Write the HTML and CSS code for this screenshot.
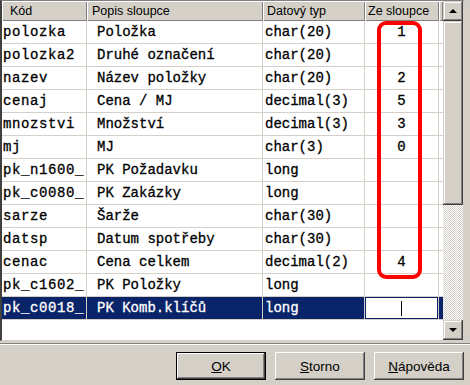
FILE: index.html
```html
<!DOCTYPE html>
<html>
<head>
    <title>Sloupce</title>
    <link rel="stylesheet" href="styles.css">
</head>
<body>
    <div class="list">
        <div class="grid">
            <div class="head">
                <div class="hcell h1">Kód</div>
                <div class="hcell h2">Popis sloupce</div>
                <div class="hcell h3">Datový typ</div>
                <div class="hcell h4">Ze sloupce</div>
                <div class="hcell h5"></div>
            </div>
            <div class="row"><div class="c kod">polozka</div><div class="c popis">Položka</div><div class="c typ">char(20)</div><div class="c ze">1</div><div class="c fill"></div></div>
            <div class="row"><div class="c kod">polozka2</div><div class="c popis">Druhé označení</div><div class="c typ">char(20)</div><div class="c ze"></div><div class="c fill"></div></div>
            <div class="row"><div class="c kod">nazev</div><div class="c popis">Název položky</div><div class="c typ">char(20)</div><div class="c ze">2</div><div class="c fill"></div></div>
            <div class="row"><div class="c kod">cenaj</div><div class="c popis">Cena / MJ</div><div class="c typ">decimal(3)</div><div class="c ze">5</div><div class="c fill"></div></div>
            <div class="row"><div class="c kod">mnozstvi</div><div class="c popis">Množství</div><div class="c typ">decimal(3)</div><div class="c ze">3</div><div class="c fill"></div></div>
            <div class="row"><div class="c kod">mj</div><div class="c popis">MJ</div><div class="c typ">char(3)</div><div class="c ze">0</div><div class="c fill"></div></div>
            <div class="row"><div class="c kod">pk_n1600_</div><div class="c popis">PK Požadavku</div><div class="c typ">long</div><div class="c ze"></div><div class="c fill"></div></div>
            <div class="row"><div class="c kod">pk_c0080_</div><div class="c popis">PK Zakázky</div><div class="c typ">long</div><div class="c ze"></div><div class="c fill"></div></div>
            <div class="row"><div class="c kod">sarze</div><div class="c popis">Šarže</div><div class="c typ">char(30)</div><div class="c ze"></div><div class="c fill"></div></div>
            <div class="row"><div class="c kod">datsp</div><div class="c popis">Datum spotřeby</div><div class="c typ">char(30)</div><div class="c ze"></div><div class="c fill"></div></div>
            <div class="row"><div class="c kod">cenac</div><div class="c popis">Cena celkem</div><div class="c typ">decimal(2)</div><div class="c ze">4</div><div class="c fill"></div></div>
            <div class="row"><div class="c kod">pk_c1602_</div><div class="c popis">PK Položky</div><div class="c typ">long</div><div class="c ze"></div><div class="c fill"></div></div>
            <div class="row selected"><div class="c kod">pk_c0018_</div><div class="c popis">PK Komb.klíčů</div><div class="c typ">long</div><div class="c ze"><div class="edit"></div></div><div class="c fill"></div></div>
        </div>
        <div class="scroll">
            <div class="sbtn"><span class="arrow up"></span></div>
            <div class="thumb"></div>
            <div class="track"></div>
            <div class="sbtn"><span class="arrow down"></span></div>
        </div>
        <div class="mark"></div>
    </div>

    <div class="sep"></div>

    <div class="buttons">
        <button class="btn default"><u>O</u>K</button>
        <button class="btn"><u>S</u>torno</button>
        <button class="btn"><u>N</u>ápověda</button>
    </div>
</body>
</html>
```
FILE: styles.css
```css
body {
    margin: 0;
    width: 470px;
    height: 385px;
    overflow: hidden;
    background: #d4d0c8;
    font-family: "Liberation Sans", Arial, sans-serif;
}
.list {
    position: relative;
    display: flex;
    width: 461px;
    height: 339px;
    background: #fff;
    border-top: 1px solid #808080;
    border-left: 2px solid #404040;
    border-bottom: 1px solid #d4d0c8;
    border-right: 2px solid #d4d0c8;
}
.grid {
    width: 441px;
}
.head, .row {
    display: grid;
    grid-template-columns: 85px 176px 102px 74px 4px;
}
.head {
    height: 20px;
}
.hcell {
    box-sizing: border-box;
    background: #d4d0c8;
    box-shadow: inset 1px 1px #fff, inset -1px -1px #808080;
    font-size: 12.5px;
    line-height: 20px;
    white-space: nowrap;
    overflow: hidden;
}
.h1 { padding-left: 8px; }
.h2 { padding-left: 5px; }
.h3 { padding-left: 4px; }
.h4 { padding-left: 3px; }
.row {
    height: 23px;
}
.c {
    box-sizing: border-box;
    border-right: 1px solid #d4d0c8;
    border-bottom: 1px solid #d4d0c8;
    font-family: "Liberation Mono", "Courier New", monospace;
    font-size: 14px;
    -webkit-text-stroke: 0.3px;
    line-height: 22px;
    white-space: nowrap;
    overflow: hidden;
}
.kod {
    padding-left: 1px;
    letter-spacing: 0.6px;
}
.popis { padding-left: 10px; }
.typ { padding-left: 2px; }
.ze { text-align: center; }
.fill { border-right: none; }
.selected .c {
    background: #0a246a;
    color: #fff;
}
.selected .ze {
    padding: 1px;
}
.edit {
    height: 20px;
    background: #fff;
    display: flex;
    justify-content: center;
    align-items: center;
}
.edit::after {
    content: "";
    width: 1px;
    height: 15px;
    background: #000;
}
.scroll {
    width: 20px;
    display: flex;
    flex-direction: column;
}
.sbtn, .thumb {
    background: #d4d0c8;
    box-shadow: inset -1px -1px #404040, inset 1px 1px #d4d0c8, inset -2px -2px #808080, inset 2px 2px #fff;
}
.sbtn {
    height: 20px;
    display: flex;
    justify-content: center;
    align-items: center;
}
.thumb {
    height: 184px;
}
.track {
    flex: 1;
    background-image: repeating-conic-gradient(#fff 0 25%, #d4d0c8 0 50%);
    background-size: 2px 2px;
}
.arrow {
    width: 0;
    height: 0;
    border-left: 4px solid transparent;
    border-right: 4px solid transparent;
}
.arrow.up { border-bottom: 4px solid #000; }
.arrow.down { border-top: 4px solid #000; }
.mark {
    position: absolute;
    left: 375px;
    top: 20px;
    width: 45px;
    height: 258px;
    box-sizing: border-box;
    border: 4px solid #f00;
    border-radius: 9px;
}
.sep {
    margin-top: 2px;
    border-top: 1px solid #808080;
    border-bottom: 1px solid #fff;
}
.buttons {
    display: flex;
    justify-content: flex-end;
    gap: 9px;
    margin-top: 7px;
    padding-right: 6px;
}
.btn {
    width: 90px;
    height: 28px;
    padding: 0;
    border: none;
    background: #d4d0c8;
    box-shadow: inset -1px -1px #404040, inset 1px 1px #fff, inset -2px -2px #808080, inset 2px 2px #d4d0c8;
    font-family: "Liberation Sans", Arial, sans-serif;
    font-size: 13.5px;
    color: #000;
}
.btn.default {
    box-shadow: inset 0 0 0 1px #000, inset -2px -2px #404040, inset 2px 2px #fff, inset -3px -3px #808080;
}
```
